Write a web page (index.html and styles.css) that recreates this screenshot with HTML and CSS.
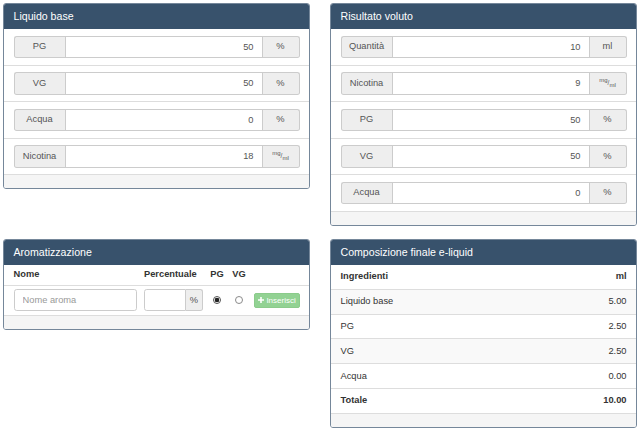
FILE: index.html
```html
<!DOCTYPE html>
<html lang="it">
<head>
    <meta charset="UTF-8">
    <meta name="viewport" content="width=device-width, initial-scale=1.0">
    <title>Calcolatore e-liquid</title>
    <link rel="stylesheet" href="styles.css">
</head>
<body>
    <div class="layout">
        <!-- Liquido base -->
        <div class="panel">
            <div class="panel-heading">Liquido base</div>
            <ul class="list">
                <li class="list-item">
                    <div class="input-group">
                        <span class="addon">PG</span>
                        <input class="field" type="text" value="50">
                        <span class="addon unit">%</span>
                    </div>
                </li>
                <li class="list-item">
                    <div class="input-group">
                        <span class="addon">VG</span>
                        <input class="field" type="text" value="50">
                        <span class="addon unit">%</span>
                    </div>
                </li>
                <li class="list-item">
                    <div class="input-group">
                        <span class="addon">Acqua</span>
                        <input class="field" type="text" value="0">
                        <span class="addon unit">%</span>
                    </div>
                </li>
                <li class="list-item">
                    <div class="input-group">
                        <span class="addon">Nicotina</span>
                        <input class="field" type="text" value="18">
                        <span class="addon unit"><span class="ratio"><sup>mg</sup>/<sub>ml</sub></span></span>
                    </div>
                </li>
            </ul>
            <div class="panel-footer"></div>
        </div>

        <!-- Risultato voluto -->
        <div class="panel">
            <div class="panel-heading">Risultato voluto</div>
            <ul class="list">
                <li class="list-item">
                    <div class="input-group">
                        <span class="addon">Quantità</span>
                        <input class="field" type="text" value="10">
                        <span class="addon unit">ml</span>
                    </div>
                </li>
                <li class="list-item">
                    <div class="input-group">
                        <span class="addon">Nicotina</span>
                        <input class="field" type="text" value="9">
                        <span class="addon unit"><span class="ratio"><sup>mg</sup>/<sub>ml</sub></span></span>
                    </div>
                </li>
                <li class="list-item">
                    <div class="input-group">
                        <span class="addon">PG</span>
                        <input class="field" type="text" value="50">
                        <span class="addon unit">%</span>
                    </div>
                </li>
                <li class="list-item">
                    <div class="input-group">
                        <span class="addon">VG</span>
                        <input class="field" type="text" value="50">
                        <span class="addon unit">%</span>
                    </div>
                </li>
                <li class="list-item">
                    <div class="input-group">
                        <span class="addon">Acqua</span>
                        <input class="field" type="text" value="0">
                        <span class="addon unit">%</span>
                    </div>
                </li>
            </ul>
            <div class="panel-footer"></div>
        </div>

        <!-- Aromatizzazione -->
        <div class="panel">
            <div class="panel-heading">Aromatizzazione</div>
            <table class="aroma-table">
                <colgroup>
                    <col class="col-name">
                    <col class="col-perc">
                    <col class="col-radio">
                    <col class="col-radio-vg">
                    <col>
                </colgroup>
                <thead>
                    <tr>
                        <th>Nome</th>
                        <th>Percentuale</th>
                        <th class="center">PG</th>
                        <th class="center">VG</th>
                        <th></th>
                    </tr>
                </thead>
                <tbody>
                    <tr>
                        <td><input class="name-field" type="text" placeholder="Nome aroma"></td>
                        <td>
                            <div class="input-group perc-group">
                                <input class="field" type="text">
                                <span class="addon unit">%</span>
                            </div>
                        </td>
                        <td class="center"><input class="radio" type="radio" name="base" checked></td>
                        <td class="center"><input class="radio" type="radio" name="base"></td>
                        <td>
                            <button class="btn-insert" type="button" disabled>
                                <svg width="6" height="6" viewBox="0 0 6 6"><path d="M2.2 0h1.6v2.2H6v1.6H3.8V6H2.2V3.8H0V2.2h2.2z" fill="#fff"/></svg>
                                Inserisci
                            </button>
                        </td>
                    </tr>
                </tbody>
            </table>
            <div class="panel-footer"></div>
        </div>

        <!-- Composizione finale -->
        <div class="panel">
            <div class="panel-heading">Composizione finale e-liquid</div>
            <table class="result-table">
                <thead>
                    <tr>
                        <th>Ingredienti</th>
                        <th class="num">ml</th>
                    </tr>
                </thead>
                <tbody>
                    <tr><td>Liquido base</td><td class="num">5.00</td></tr>
                    <tr><td>PG</td><td class="num">2.50</td></tr>
                    <tr><td>VG</td><td class="num">2.50</td></tr>
                    <tr><td>Acqua</td><td class="num">0.00</td></tr>
                </tbody>
                <tfoot>
                    <tr><th>Totale</th><th class="num">10.00</th></tr>
                </tfoot>
            </table>
            <div class="panel-footer"></div>
        </div>
    </div>
</body>
</html>
```

FILE: styles.css
```css
:root {
    --heading: #38526c;
    --panel-border: #75879a;
    --line: #ddd;
    --addon-bg: #eee;
    --input-border: #ccc;
}

* {
    box-sizing: border-box;
}

body {
    margin: 0;
    padding: 3px;
    font-family: "Liberation Sans", Arial, sans-serif;
    font-size: 9.3px;
    line-height: 1.43;
    color: #333;
    background-color: #fff;
}

.layout {
    display: grid;
    grid-template-columns: 1fr 1fr;
    column-gap: 20px;
    align-items: start;
}

.panel {
    border: 1px solid var(--panel-border);
    border-radius: 3px;
    margin-bottom: 13px;
    overflow: hidden;
    background-color: #fff;
}

.panel-heading {
    height: 25px;
    padding: 0 9.5px;
    display: flex;
    align-items: center;
    background-color: var(--heading);
    color: #fff;
    font-size: 10.6px;
}

.panel-footer {
    height: 14.3px;
    background-color: #f5f5f5;
    border-top: 1px solid var(--line);
}

.list {
    list-style: none;
    margin: 0;
    padding: 0;
}

.list-item {
    padding: 6.5px 9.5px;
    border-top: 1px solid var(--line);
}

.list-item:first-child {
    border-top: 0;
}

.input-group {
    display: flex;
    height: 22.5px;
}

.addon {
    flex: none;
    width: 51px;
    display: flex;
    align-items: center;
    justify-content: center;
    background-color: var(--addon-bg);
    border: 1px solid var(--input-border);
    border-right: 0;
    border-radius: 2.7px 0 0 2.7px;
    color: #555;
}

.addon.unit {
    width: 37px;
    border-right: 1px solid var(--input-border);
    border-left: 0;
    border-radius: 0 2.7px 2.7px 0;
}

.ratio {
    font-size: 6.5px;
    line-height: 1;
}

.ratio sup,
.ratio sub {
    font-size: 6px;
    line-height: 0;
}

.field {
    flex: 1;
    min-width: 0;
    height: 100%;
    margin: 0;
    padding: 0 8px;
    border: 1px solid var(--input-border);
    font: inherit;
    color: #555;
    text-align: right;
    outline: none;
}

/* Aromatizzazione */
.aroma-table,
.result-table {
    width: 100%;
    border-collapse: collapse;
    table-layout: fixed;
}

.col-name { width: 136.7px; }
.col-perc { width: 65.6px; }
.col-radio { width: 21.3px; }
.col-radio-vg { width: 23px; }

.aroma-table th,
.aroma-table td {
    padding: 3.3px;
    text-align: left;
    vertical-align: middle;
}

.aroma-table th {
    font-weight: bold;
    border-bottom: 1.5px solid var(--line);
}

.aroma-table th:first-child,
.aroma-table td:first-child {
    padding-left: 9.5px;
}

.aroma-table th:last-child,
.aroma-table td:last-child {
    padding-right: 10px;
}

.aroma-table .center {
    text-align: center;
}

.name-field {
    display: block;
    width: 100%;
    height: 22.5px;
    margin: 0;
    padding: 0 8px;
    border: 1px solid var(--input-border);
    border-radius: 2.7px;
    font: inherit;
    color: #555;
    outline: none;
}

.name-field::placeholder {
    color: #999;
}

.perc-group {
    width: 59px;
}

.perc-group .field {
    border-radius: 2.7px 0 0 2.7px;
}

.perc-group .addon.unit {
    width: 17px;
}

.radio {
    appearance: none;
    width: 8.5px;
    height: 8.5px;
    margin: 0;
    border: 1px solid #8a8a8a;
    border-radius: 50%;
    background-color: #fff;
    vertical-align: middle;
}

.radio:checked {
    border-color: #555;
    background: radial-gradient(circle, #222 0 2px, #fff 2.6px);
}

.btn-insert {
    display: inline-flex;
    align-items: center;
    gap: 2px;
    height: 15px;
    padding: 0 3.5px;
    border: 1px solid #8bcb8b;
    border-radius: 2px;
    background-color: #92d293;
    color: #fff;
    font-family: inherit;
    font-size: 8px;
    white-space: nowrap;
}

/* Composizione finale */
.result-table th,
.result-table td {
    padding: 5.3px;
    text-align: left;
    border-top: 1px solid var(--line);
}

.result-table thead th {
    border-top: 0;
    border-bottom: 1.5px solid var(--line);
}

.result-table th:first-child,
.result-table td:first-child {
    padding-left: 9.5px;
}

.result-table th:last-child,
.result-table td:last-child {
    padding-right: 9.5px;
}

.result-table tbody tr:first-child td {
    border-top: 0;
}

.result-table tbody tr:nth-child(odd) {
    background-color: #f9f9f9;
}

.result-table .num {
    text-align: right;
}
```
